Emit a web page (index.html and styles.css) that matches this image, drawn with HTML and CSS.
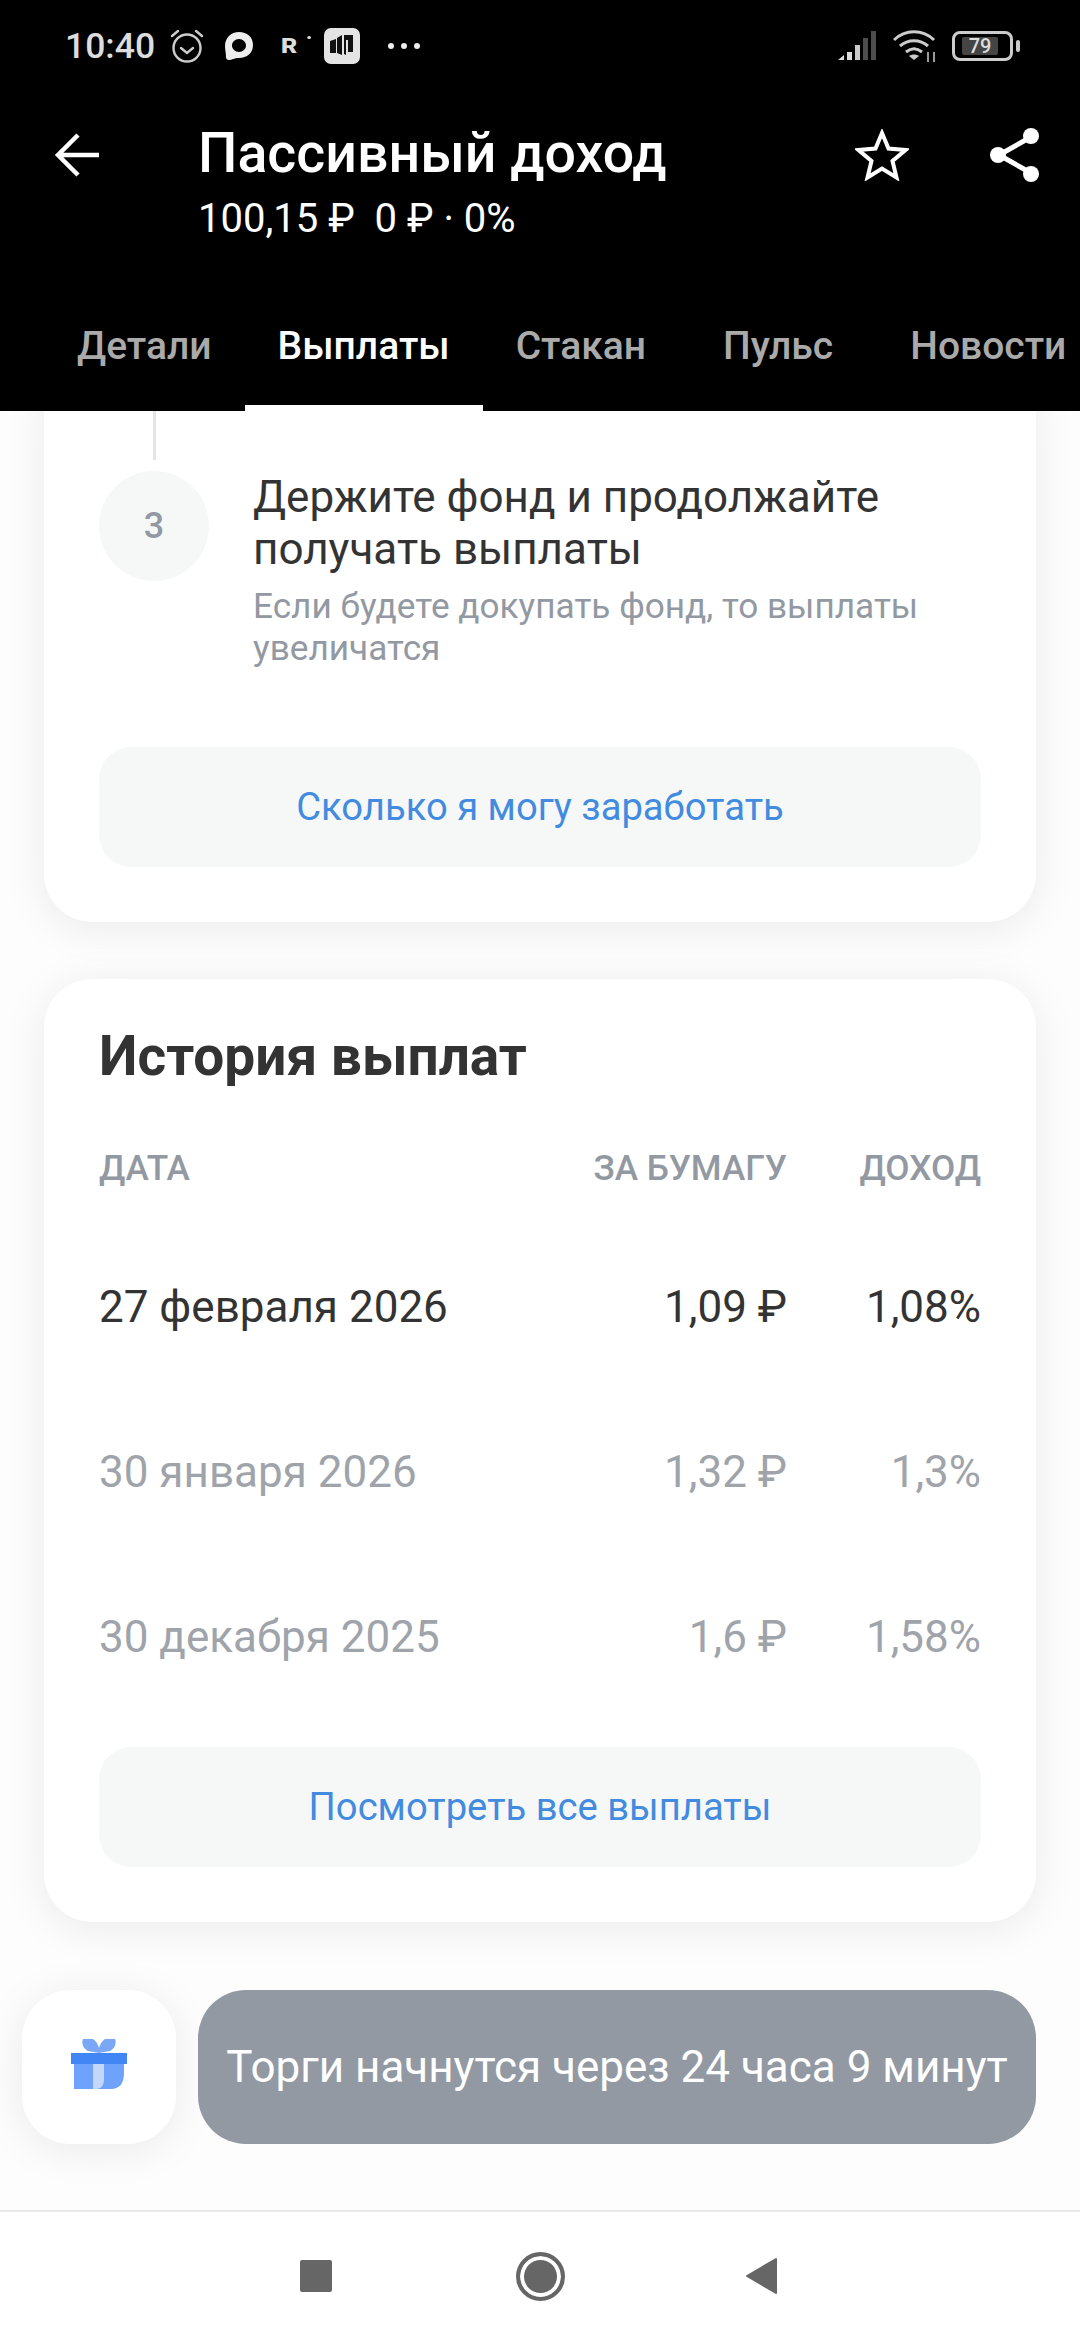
FILE: index.html
```html
<!DOCTYPE html>
<html lang="ru">
<head>
  <meta charset="UTF-8" />
  <meta name="viewport" content="width=device-width, initial-scale=1.0"/>
  <title>Пассивный доход</title>
  <link rel="stylesheet" href="styles.css">
</head>
<body>
  <header class="top">
    <div class="status">
      <span class="status-time">10:40</span>
      <svg class="ic-alarm" width="36" height="36" viewBox="0 0 36 36" fill="none" stroke="#ccc" stroke-width="2.4">
        <circle cx="18" cy="20" r="13.5"/>
        <path d="M12 20l6 5 6-5M3 8l6-5M33 8l-6-5" stroke-linecap="round"/>
      </svg>
      <svg class="ic-chat" width="30" height="32" viewBox="0 0 30 32">
        <path fill="#eee" d="M15 2C7 2 1 8 1 16c0 4 1 7 1 11 0 2 1 3 3 3 3 0 5-2 10-2 8 0 14-5 14-13S23 2 15 2zm0 7c4 0 7 3 7 6.500S19 22 15 22s-7-3-7-6.500S11 9 15 9z"/>
      </svg>
      <span class="status-r">R</span>
      <svg class="ic-app" width="36" height="36" viewBox="0 0 36 36">
        <rect width="36" height="36" rx="7" fill="#e4e4e4"/>
        <path fill="#111" d="M6 13l6-2v14H6zM13 10l5-3v20l-5-2zM20 7h9v17h-5V12h-2v15l-2-1z"/>
      </svg>
      <span class="status-dots"><i></i><i></i><i></i></span>
      <span class="status-right">
        <svg width="40" height="30" viewBox="0 0 40 30">
          <path fill="#ddd" d="M0 29l6-5v5zM9 21h5v8H9z"/>
          <path fill="#ccc" d="M17 14h5v15h-5z"/>
          <path fill="#4d4d4d" d="M25 7h5v22h-5zM33 0h5v29h-5z"/>
        </svg>
        <svg class="ic-wifi" width="44" height="34" viewBox="0 0 44 34" fill="none" stroke="#ccc" stroke-width="3">
          <path d="M1 11C12 0 30 0 41 11M7 17c8-7 20-7 28 0M13 23c5-4 11-4 16 0"/>
          <path fill="#ccc" stroke="none" d="M16 27c3-2 7-2 10 0l-5 4z"/>
          <path stroke-width="1.500" d="M35 23v10M41 23v10"/>
        </svg>
        <span class="battery">
          <span class="battery-box"><span class="battery-val">79</span></span>
          <span class="battery-tip"></span>
        </span>
      </span>
    </div>

    <div class="bar">
      <svg class="bar-back" width="46" height="46" viewBox="0 0 46 46" fill="none" stroke="#fff" stroke-width="4.500">
        <path d="M45 23H4M24 3L4 23l20 20"/>
      </svg>
      <div class="bar-title">
        <h1>Пассивный доход</h1>
        <p>100,15 ₽&nbsp; 0 ₽ · 0%</p>
      </div>
      <svg class="bar-star" width="54" height="52" viewBox="0 0 54 52" fill="none" stroke="#fff" stroke-width="4">
        <path d="M27 4l6.500 15.500 17 1.500-13 11 4 16.500L27 39.500 12.500 48.500l4-16.500-13-11 17-1.500z"/>
      </svg>
      <svg class="bar-share" width="50" height="56" viewBox="0 0 50 56">
        <path stroke="#fff" stroke-width="5" fill="none" d="M41 10L9 28l32 18"/>
        <circle cx="41" cy="9" r="8" fill="#fff"/>
        <circle cx="8" cy="28" r="8" fill="#fff"/>
        <circle cx="41" cy="47" r="8" fill="#fff"/>
      </svg>
    </div>

    <nav class="tabs">
      <a class="tab tab-first">Детали</a>
      <a class="tab tab-active">Выплаты</a>
      <a class="tab">Стакан</a>
      <a class="tab tab-spaced">Пульс</a>
      <a class="tab tab-spaced">Новости</a>
    </nav>
  </header>

  <main class="content">
    <section class="card card-steps">
      <div class="step">
        <div class="step-mark">
          <span class="step-line"></span>
          <span class="step-num">3</span>
        </div>
        <div class="step-text">
          <h3>Держите фонд и продолжайте получать выплаты</h3>
          <p>Если будете докупать фонд, то выплаты увеличатся</p>
        </div>
      </div>
      <a class="btn">Сколько я могу заработать</a>
    </section>

    <section class="card card-history">
      <h2>История выплат</h2>
      <div class="row row-head">
        <span>Дата</span><span class="col-paper">За бумагу</span><span class="col-yield">Доход</span>
      </div>
      <div class="row row-new">
        <span>27 февраля 2026</span><span class="col-paper">1,09 ₽</span><span class="col-yield">1,08%</span>
      </div>
      <div class="row">
        <span>30 января 2026</span><span class="col-paper">1,32 ₽</span><span class="col-yield">1,3%</span>
      </div>
      <div class="row">
        <span>30 декабря 2025</span><span class="col-paper">1,6 ₽</span><span class="col-yield">1,58%</span>
      </div>
      <a class="btn btn-all">Посмотреть все выплаты</a>
    </section>

    <div class="floating">
      <div class="gift">
        <svg width="56" height="56" viewBox="0 0 56 56">
          <path fill="#7aa8f7" d="M12 0h10c3 2 5 5 6 9 1-4 3-7 6-9h10c2 5-1 10-5 12l-11 2-11-2C13 10 10 5 12 0z"/>
          <path fill="#6fa3fb" d="M3 14h50v20c0 11-5 16-13 16H3z"/>
          <path fill="#c3d7fb" d="M22 14h12v26c0 6-3 10-9 10h-3z"/>
          <path fill="#6fa3fb" d="M33 24h3v16c0 5-3 9-6 10h-3c4-1 6-5 6-10z"/>
          <rect y="14" width="56" height="11" fill="#4285f4"/>
        </svg>
      </div>
      <div class="notice">Торги начнутся через 24 часа 9 минут</div>
    </div>
  </main>

  <footer class="nav">
    <span class="nav-square"></span>
    <span class="nav-home"></span>
    <svg class="nav-back" width="32" height="38" viewBox="0 0 32 38">
      <path fill="#666" stroke="#666" stroke-width="2" stroke-linejoin="round" d="M2 19L31 2v34z"/>
    </svg>
  </footer>
</body>
</html>
```

FILE: styles.css
```css
* {
  box-sizing: border-box;
}

html, body {
  margin: 0;
  height: 2340px;
}

body {
  display: flex;
  flex-direction: column;
  width: 1080px;
  overflow: hidden;
  font-family: Roboto, "Noto Sans", sans-serif;
  background: #fdfdfd;
  color: #333;
}

h1, h2, h3, p {
  margin: 0;
}

/* top block */
.top {
  height: 411px;
  flex: none;
  background: #000;
  color: #fff;
}

.status {
  display: flex;
  align-items: center;
  height: 92px;
  padding: 0 60px 0 65px;
}

.status-time {
  font-size: 35.5px;
  font-weight: 500;
  color: #ddd;
}

.ic-alarm {
  margin-left: 14px;
}

.ic-chat {
  margin-left: 19px;
}

.status-r {
  position: relative;
  margin-left: 27px;
  width: 22px;
  font-size: 20px;
  font-weight: 900;
  color: #ddd;
  transform: scaleX(1.25);
  transform-origin: left center;
}

.status-r::after {
  content: "";
  position: absolute;
  top: 2px;
  right: -2px;
  width: 3px;
  height: 3px;
  border-radius: 50%;
  background: #ddd;
}

.ic-app {
  margin-left: 21px;
}

.status-dots {
  display: flex;
  gap: 7px;
  margin-left: 28px;
}

.status-dots i {
  width: 6px;
  height: 6px;
  border-radius: 50%;
  background: #eee;
}

.status-right {
  display: flex;
  align-items: center;
  margin-left: auto;
}

.ic-wifi {
  margin-left: 15px;
}

.battery {
  display: flex;
  align-items: center;
  gap: 3px;
  margin-left: 15px;
}

.battery-box {
  display: flex;
  align-items: center;
  justify-content: flex-start;
  width: 61px;
  height: 30px;
  padding-left: 7px;
  border: 3px solid #ccc;
  border-radius: 8px;
}

.battery-val {
  width: 36px;
  height: 18px;
  background: #444;
  border-radius: 2px;
  font-size: 20px;
  font-weight: 500;
  line-height: 18px;
  text-align: center;
  color: #ddd;
}

.battery-tip {
  width: 4px;
  height: 12px;
  border-radius: 2px;
  background: #ccc;
}

.bar {
  display: flex;
  align-items: flex-start;
  height: 218px;
  padding: 38px 40px 0 54px;
}

.bar-back {
  flex: none;
  margin-top: 2px;
}

.bar-title {
  flex: 1;
  margin-left: 98px;
  margin-top: -11px;
}

.bar-title h1 {
  font-size: 55.5px;
  line-height: 70px;
  font-weight: 500;
}

.bar-title p {
  margin-top: 5px;
  font-size: 40px;
  line-height: 50px;
}

.bar-star {
  flex: none;
  margin-top: -1px;
}

.bar-share {
  flex: none;
  margin-left: 81px;
  margin-top: -3px;
}

.tabs {
  display: flex;
  height: 101px;
  font-size: 39px;
  font-weight: 500;
  color: #aaa;
  white-space: nowrap;
}

.tab {
  display: flex;
  align-items: center;
  height: 101px;
  padding: 0 33px 29px;
}

.tab-first {
  margin-left: 44px;
}

.tab-active {
  padding-bottom: 23px;
  border-bottom: 6px solid #fff;
  color: #fff;
}

.tab-spaced {
  margin-left: 11px;
}

/* scroll area */
.content {
  flex: 1;
  overflow: hidden;
  padding: 0 44px;
}

.card {
  background: #fff;
  border-radius: 48px;
  padding: 0 55px;
  box-shadow: 0 6px 44px rgba(0, 0, 0, 0.08);
}

.card-steps {
  margin-top: -40px;
  padding-top: 40px;
  height: 551px;
}

.step {
  display: flex;
}

.step-mark {
  display: flex;
  flex-direction: column;
  align-items: center;
  width: 110px;
  flex: none;
}

.step-line {
  width: 3px;
  height: 49px;
  background: #e4e5e7;
}

.step-num {
  display: flex;
  align-items: center;
  justify-content: center;
  width: 110px;
  height: 110px;
  margin-top: 11px;
  border-radius: 50%;
  background: #f6f8f8;
  font-size: 36px;
  font-weight: 500;
  color: #9299a2;
}

.step-text {
  margin-left: 44px;
  padding-top: 60px;
  width: 700px;
}

.step-text h3 {
  font-size: 44px;
  line-height: 52px;
  font-weight: 400;
  color: #333;
}

.step-text p {
  margin-top: 10px;
  font-size: 35.2px;
  line-height: 42px;
  color: #9299a2;
}

.btn {
  display: flex;
  align-items: center;
  justify-content: center;
  height: 120px;
  margin-top: 78px;
  border-radius: 32px;
  background: #f6f8f8;
  font-size: 38.2px;
  color: #428bdf;
}

.card-history {
  height: 943px;
  margin-top: 57px;
  padding-top: 45px;
}

.card-history h2 {
  font-size: 55px;
  line-height: 65px;
  font-weight: 700;
  color: #333;
}

.row {
  display: flex;
  align-items: center;
  height: 165px;
  font-size: 44px;
  color: #9fa4ab;
}

.row-new {
  color: #333;
}

.row-head {
  height: 40px;
  margin-top: 59px;
  margin-bottom: 36px;
  font-size: 35.2px;
  font-weight: 500;
  text-transform: uppercase;
  color: #9299a2;
}

.row > span:first-child {
  flex: 1;
}

.col-paper {
  width: 300px;
  text-align: right;
}

.col-yield {
  width: 194px;
  text-align: right;
}

.btn-all {
  margin-top: 28px;
}

.floating {
  display: flex;
  gap: 22px;
  height: 154px;
  margin: 68px 0 0 -22px;
}

.gift {
  display: flex;
  align-items: center;
  justify-content: center;
  width: 154px;
  border-radius: 48px;
  background: #fff;
  box-shadow: 0 6px 44px rgba(0, 0, 0, 0.08);
}

.notice {
  display: flex;
  align-items: center;
  justify-content: center;
  flex: 1;
  border-radius: 48px;
  background: #9299a2;
  font-size: 44px;
  color: #fff;
}

/* android buttons */
.nav {
  display: flex;
  align-items: center;
  height: 130px;
  flex: none;
  padding: 0 0 0 300px;
  background: #fff;
  border-top: 2px solid #e9e9e9;
}

.nav-square {
  width: 32px;
  height: 32px;
  border-radius: 2px;
  background: #666;
}

.nav-home {
  width: 49px;
  height: 49px;
  margin-left: 184px;
  border-radius: 50%;
  background: #666;
  border: 4px solid #666;
  box-shadow: inset 0 0 0 4px #fff;
}

.nav-back {
  margin-left: 180px;
}
```
